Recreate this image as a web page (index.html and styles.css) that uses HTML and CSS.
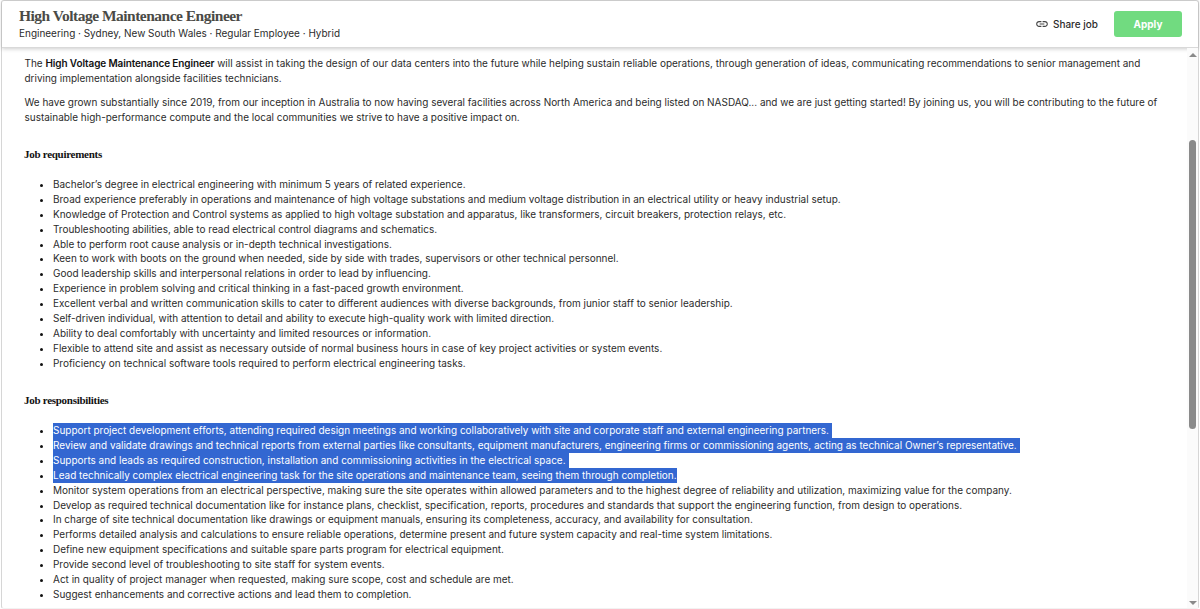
FILE: index.html
```html
<!DOCTYPE html>
<html lang="en">
<head>
    <meta charset="UTF-8">
    <meta name="viewport" content="width=device-width, initial-scale=1.0">
    <title>High Voltage Maintenance Engineer</title>
    <link rel="stylesheet" href="styles.css">
</head>
<body>
    <div class="page">
        <header class="header">
            <div class="header-info">
                <h1>High Voltage Maintenance Engineer</h1>
                <p class="meta">Engineering · Sydney, New South Wales · Regular Employee · Hybrid</p>
            </div>
            <div class="actions">
                <a class="share">
                    <svg class="share-icon" viewBox="0 0 24 24"><path d="M3.9 12c0-1.71 1.39-3.1 3.1-3.1h4V7H7c-2.76 0-5 2.24-5 5s2.24 5 5 5h4v-1.9H7c-1.71 0-3.1-1.39-3.1-3.1zM8 13h8v-2H8v2zm9-6h-4v1.9h4c1.71 0 3.1 1.39 3.1 3.1s-1.39 3.1-3.1 3.1h-4V17h4c2.76 0 5-2.24 5-5s-2.24-5-5-5z"/></svg>
                    <span>Share job</span>
                </a>
                <button class="apply" type="button">Apply</button>
            </div>
        </header>

        <div class="body">
            <main class="content">
                <p>The <strong>High Voltage Maintenance Engineer</strong> will assist in taking the design of our data centers into the future while helping sustain reliable operations, through generation of ideas, communicating recommendations to senior management and<br>driving implementation alongside facilities technicians.</p>
                <p>We have grown substantially since 2019, from our inception in Australia to now having several facilities across North America and being listed on NASDAQ... and we are just getting started! By joining us, you will be contributing to the future of<br>sustainable high-performance compute and the local communities we strive to have a positive impact on.</p>

                <h2>Job requirements</h2>
                <ul>
                    <li>Bachelor’s degree in electrical engineering with minimum 5 years of related experience.</li>
                    <li>Broad experience preferably in operations and maintenance of high voltage substations and medium voltage distribution in an electrical utility or heavy industrial setup.</li>
                    <li>Knowledge of Protection and Control systems as applied to high voltage substation and apparatus, like transformers, circuit breakers, protection relays, etc.</li>
                    <li>Troubleshooting abilities, able to read electrical control diagrams and schematics.</li>
                    <li>Able to perform root cause analysis or in-depth technical investigations.</li>
                    <li>Keen to work with boots on the ground when needed, side by side with trades, supervisors or other technical personnel.</li>
                    <li>Good leadership skills and interpersonal relations in order to lead by influencing.</li>
                    <li>Experience in problem solving and critical thinking in a fast-paced growth environment.</li>
                    <li>Excellent verbal and written communication skills to cater to different audiences with diverse backgrounds, from junior staff to senior leadership.</li>
                    <li>Self-driven individual, with attention to detail and ability to execute high-quality work with limited direction.</li>
                    <li>Ability to deal comfortably with uncertainty and limited resources or information.</li>
                    <li>Flexible to attend site and assist as necessary outside of normal business hours in case of key project activities or system events.</li>
                    <li>Proficiency on technical software tools required to perform electrical engineering tasks.</li>
                </ul>

                <h2>Job responsibilities</h2>
                <ul>
                    <li><span class="selected">Support project development efforts, attending required design meetings and working collaboratively with site and corporate staff and external engineering partners.</span></li>
                    <li><span class="selected">Review and validate drawings and technical reports from external parties like consultants, equipment manufacturers, engineering firms or commissioning agents, acting as technical Owner’s representative.</span></li>
                    <li><span class="selected">Supports and leads as required construction, installation and commissioning activities in the electrical space.</span></li>
                    <li><span class="selected last">Lead technically complex electrical engineering task for the site operations and maintenance team, seeing them through completion.</span></li>
                    <li>Monitor system operations from an electrical perspective, making sure the site operates within allowed parameters and to the highest degree of reliability and utilization, maximizing value for the company.</li>
                    <li>Develop as required technical documentation like for instance plans, checklist, specification, reports, procedures and standards that support the engineering function, from design to operations.</li>
                    <li>In charge of site technical documentation like drawings or equipment manuals, ensuring its completeness, accuracy, and availability for consultation.</li>
                    <li>Performs detailed analysis and calculations to ensure reliable operations, determine present and future system capacity and real-time system limitations.</li>
                    <li>Define new equipment specifications and suitable spare parts program for electrical equipment.</li>
                    <li>Provide second level of troubleshooting to site staff for system events.</li>
                    <li>Act in quality of project manager when requested, making sure scope, cost and schedule are met.</li>
                    <li>Suggest enhancements and corrective actions and lead them to completion.</li>
                </ul>
            </main>
            <div class="scrollbar">
                <span class="arrow up"></span>
                <span class="thumb"></span>
                <span class="arrow down"></span>
            </div>
        </div>
    </div>
</body>
</html>
```
FILE: styles.css
```css
* {
    box-sizing: border-box;
}
body {
    margin: 0;
    height: 609px;
    overflow: hidden;
    background-color: #fff;
    color: #2b2b2b;
    font-family: Inter, sans-serif;
    font-size: 9.98px;
    line-height: 14.95px;
}
.page {
    display: flex;
    flex-direction: column;
    height: 609px;
    margin: 0 1px;
    border: 1px solid #d6d6d6;
    border-bottom-color: #f2f2f2;
    border-radius: 3px;
}
.header {
    display: flex;
    justify-content: space-between;
    flex: none;
    height: 47px;
    padding: 6px 16px 0 17px;
    border-bottom: 1px solid #d9d9d9;
    box-shadow: 0 1px 4px rgba(0, 0, 0, 0.2);
}
h1 {
    margin: 0;
    color: #4a4a46;
    font-family: "Liberation Serif", serif;
    font-size: 15.5px;
    line-height: 17px;
    letter-spacing: -0.51px;
    white-space: nowrap;
}
.meta {
    margin: 2px 0 0;
    white-space: nowrap;
}
.actions {
    display: flex;
    align-items: center;
    gap: 16px;
    height: 34px;
}
.share {
    display: flex;
    align-items: center;
    gap: 4px;
    font-weight: 500;
}
.share-icon {
    width: 14px;
    height: 14px;
    fill: #444;
}
.apply {
    width: 68px;
    height: 26px;
    padding: 0;
    border: none;
    border-radius: 3px;
    background-color: #71db80;
    color: #fff;
    font-family: inherit;
    font-size: 10px;
    font-weight: 700;
}
.body {
    display: flex;
    flex: 1;
    min-height: 0;
    overflow: hidden;
}
.content {
    flex: 1;
    padding: 7.6px 0 0 22.5px;
    white-space: nowrap;
}
.content p {
    margin: 0 0 9.6px;
}
strong {
    color: #111;
    font-weight: 600;
    letter-spacing: -0.1px;
}
h2 {
    margin: 21.7px 0 15px -0.5px;
    color: #111;
    font-family: "Liberation Serif", serif;
    font-size: 11px;
    line-height: 15px;
    letter-spacing: -0.28px;
}
ul {
    margin: 0;
    padding-left: 28.5px;
}
li::marker {
    color: #111;
}
/* Highlighted text */
.selected {
    display: inline-block;
    height: 15px;
    margin-bottom: -1px;
    padding-right: 3px;
    background-color: #3367d1;
    color: #fff;
    vertical-align: top;
}
.selected.last {
    padding-right: 0;
}
.scrollbar {
    display: flex;
    flex-direction: column;
    align-items: center;
    width: 11px;
    padding: 5px 0 3px;
    background-color: #fbfbfb;
}
.arrow {
    border: 4px solid transparent;
}
.arrow.up {
    border-top: none;
    border-bottom-color: #8a8a8a;
}
.arrow.down {
    margin-top: auto;
    border-bottom: none;
    border-top-color: #8a8a8a;
}
.thumb {
    width: 7px;
    height: 289px;
    margin-top: 83px;
    border-radius: 4px;
    background-color: #8a8a8a;
}
```
